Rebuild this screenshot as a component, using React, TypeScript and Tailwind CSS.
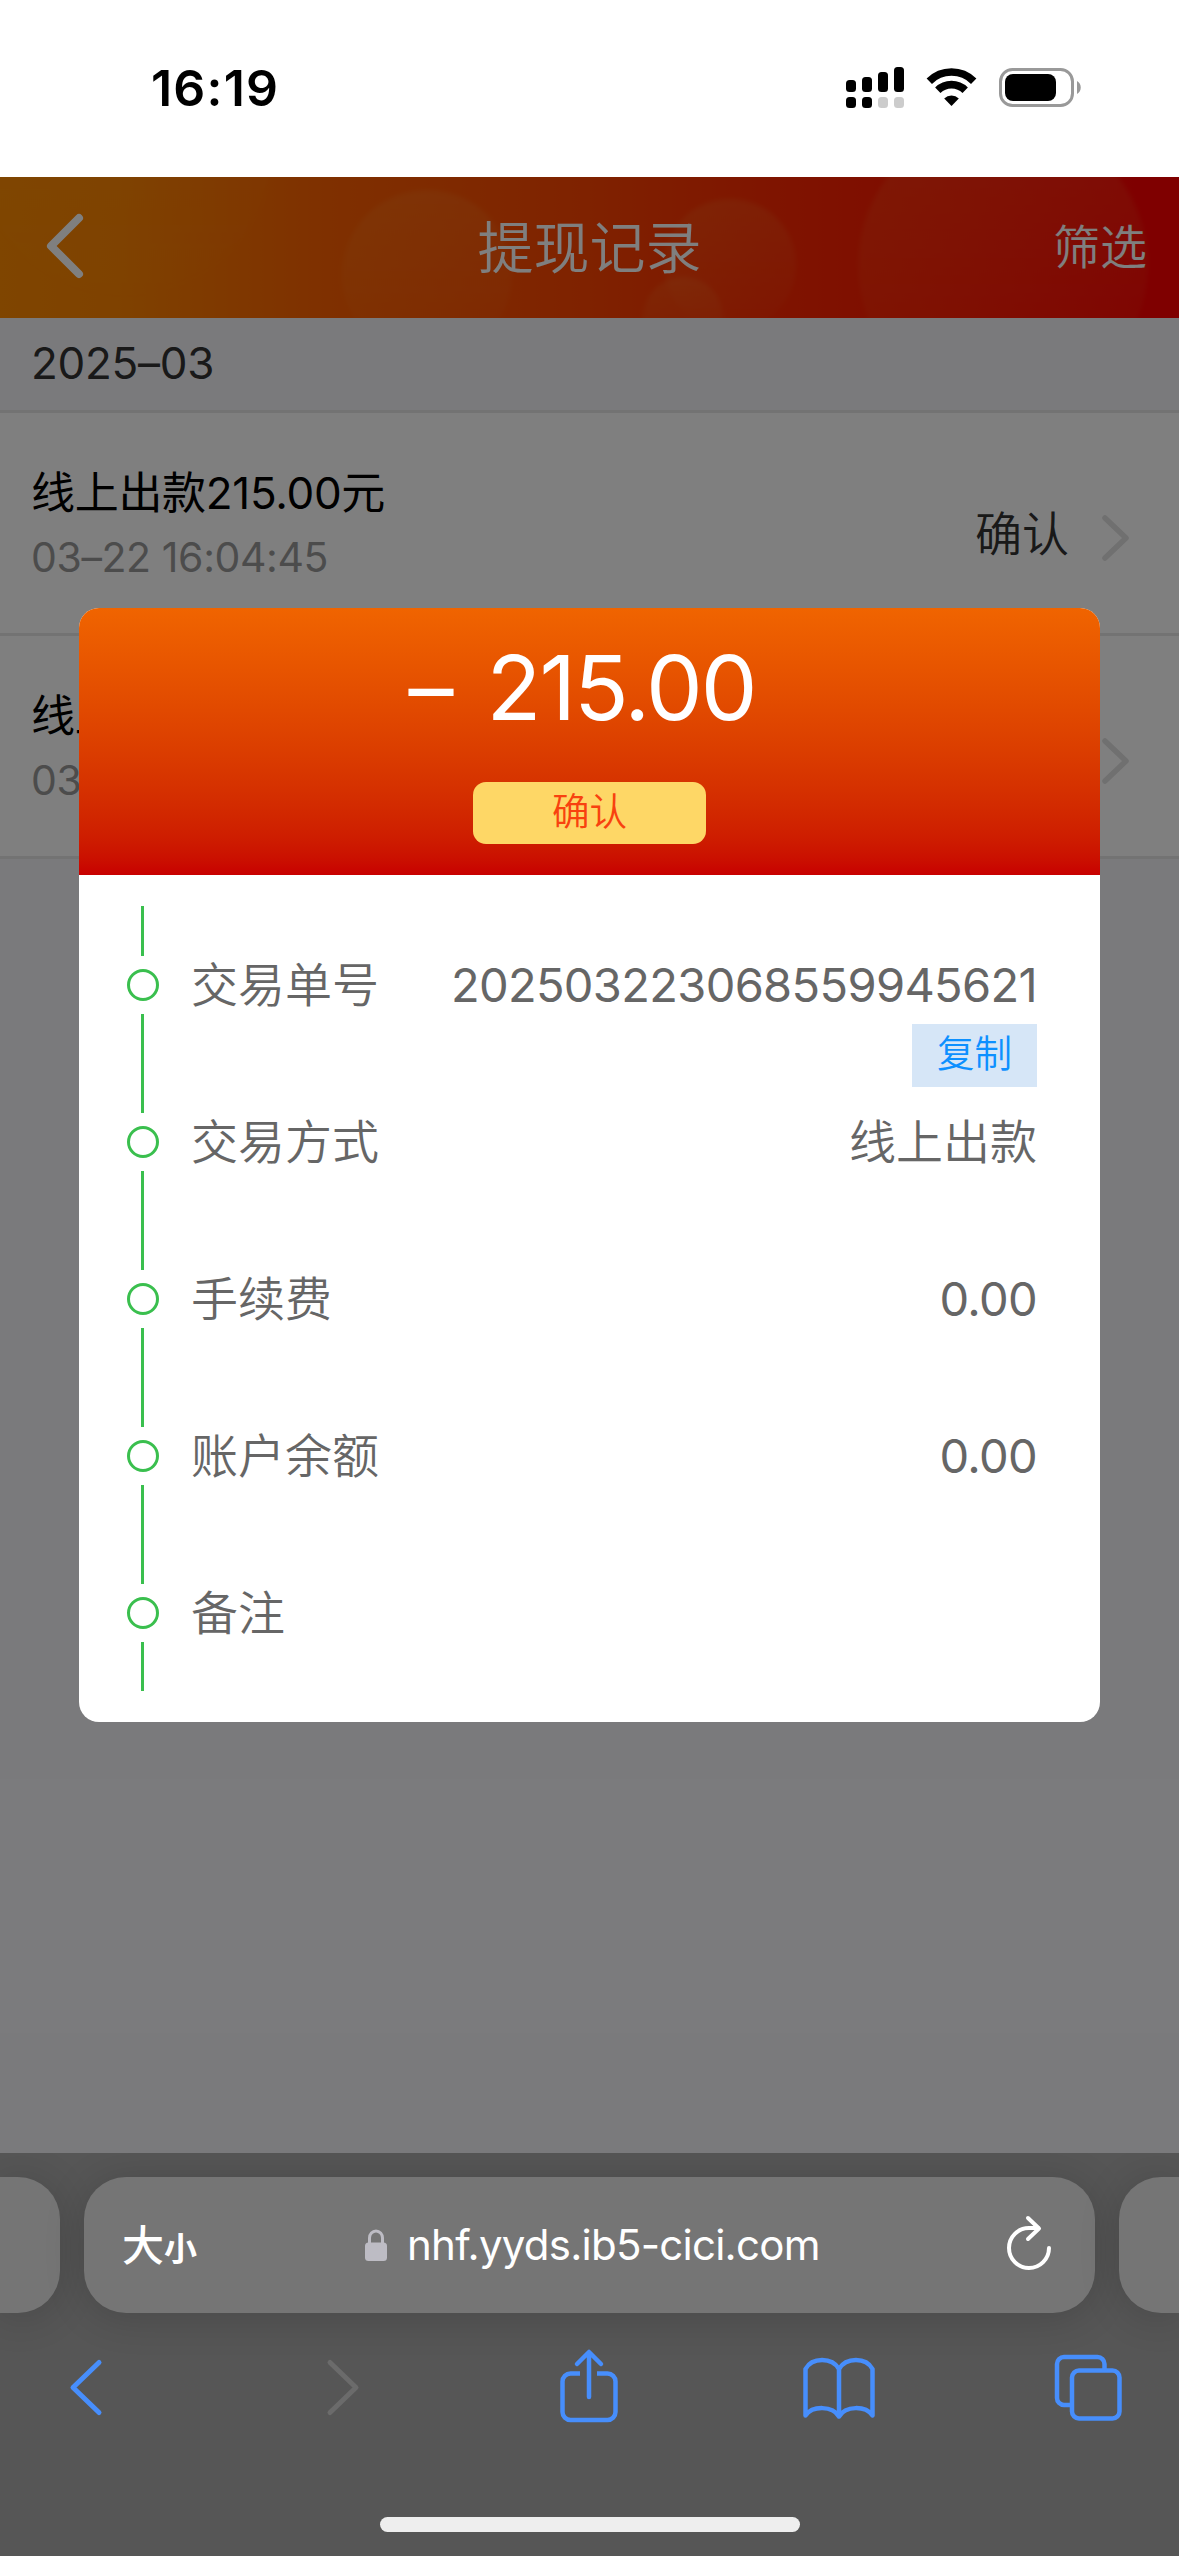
const records = [
    { title: "线上出款215.00元", time: "03–22 16:04:45", status: "确认" },
    { title: "线上出款215.00元", time: "03–22 16:01:12", status: "确认" },
];

const details = [
    { label: "交易单号", value: "202503223068559945621", copy: true },
    { label: "交易方式", value: "线上出款", text: true },
    { label: "手续费", value: "0.00" },
    { label: "账户余额", value: "0.00" },
    { label: "备注", value: "" },
];

function StatusBar() {
    return (
        <div className="h-[177px] bg-white flex justify-between pl-[151px] pr-[97px]">
            <div className="pt-[58px] h-[118px] leading-[60px] text-[50px] font-semibold tracking-[1.200px] text-black">16:19</div>
            <div className="flex pt-[66px]">
                <svg width="58" height="42" viewBox="0 0 58 42">
                    <rect x="0" y="14" width="10" height="12" rx="3.5" />
                    <rect x="16" y="11" width="10" height="15" rx="3.5" />
                    <rect x="32" y="6" width="10" height="20" rx="3.5" />
                    <rect x="48" y="1" width="10" height="25" rx="3.5" />
                    <rect x="0" y="31" width="10" height="11" rx="3.5" />
                    <rect x="16" y="31" width="10" height="11" rx="3.5" />
                    <rect x="32" y="31" width="10" height="11" rx="3.5" fill="#ccc" />
                    <rect x="48" y="31" width="10" height="11" rx="3.5" fill="#ccc" />
                </svg>
                <svg className="ml-[22px]" width="51" height="42" viewBox="0 0 51 42">
                    <path d="M3.3 15.2a31.5 31.5 0 0 1 44.4 0" fill="none" stroke="#000" strokeWidth="7.6" />
                    <path d="M11.8 24.2a19.5 19.5 0 0 1 27.4 0" fill="none" stroke="#000" strokeWidth="7.6" />
                    <path d="M18.2 32.6a10.4 10.4 0 0 1 14.6 0L25.5 40z" />
                </svg>
                <svg className="ml-[22px]" width="83" height="42" viewBox="0 0 83 42">
                    <rect x="1.5" y="3.5" width="72" height="36" rx="12" fill="none" stroke="#999" strokeWidth="3" />
                    <rect x="6" y="8" width="51" height="27" rx="8" />
                    <path d="M78 15c5 2.500 5 10.500 0 13z" fill="#999" />
                </svg>
            </div>
        </div>
    );
}

function NavBar() {
    return (
        <header className="relative h-[141px] bg-[linear-gradient(90deg,#ff8a00_0%,#ff8400_10%,#ff6000_28%,#ff4400_50%,#ff2800_66%,#ff1400_82%,#ff0000_97%)] overflow-hidden">
            <svg className="absolute inset-0" width="1179" height="141" viewBox="0 0 1179 141" fill="url(#bokeh)">
                <defs>
                    <linearGradient id="bokeh" x1="0" y1="0" x2="0" y2="1">
                        <stop offset="0" stopColor="#ffb450" stopOpacity="0.15" />
                        <stop offset="1" stopColor="#ffb450" stopOpacity="0.02" />
                    </linearGradient>
                    <filter id="soft">
                        <feGaussianBlur stdDeviation="2.500" />
                    </filter>
                </defs>
                <g filter="url(#soft)">
                    <circle cx="125" cy="-30" r="148" fillOpacity=".5" />
                    <circle cx="427" cy="98" r="85" />
                    <circle cx="730" cy="88" r="66" />
                    <circle cx="683" cy="140" r="40" />
                    <circle cx="1003" cy="88" r="145" />
                </g>
            </svg>
            <div className="relative h-full grid grid-cols-[1fr_auto_1fr] items-center pl-[45px] pr-[32px] text-white">
                <svg className="-mt-[3px]" width="92" height="68" viewBox="0 0 92 68" fill="none" stroke="currentColor" strokeWidth="8" strokeLinecap="round" strokeLinejoin="round">
                    <path d="M34 6 6 34l28 28" />
                </svg>
                <h1 className="text-[56px] leading-[70px] -ml-[13px] font-[350]">提现记录</h1>
                <span className="text-[47px] leading-[60px] pb-[2px] text-right">筛选</span>
            </div>
        </header>
    );
}

function RecordList() {
    return (
        <>
            <div className="h-[95px] bg-[#f5f5f9] border-b-[3px] border-[#e6e6e6] px-[31px] text-[44px] leading-[91px] tracking-[-0.3px] text-[#333] font-normal">2025–03</div>
            {records.map((record) => (
                <div key={record.time} className="h-[223px] bg-white border-b-[3px] border-[#e6e6e6] pl-[31px] pr-[48px] flex items-center justify-between">
                    <div className="pt-[3px] font-normal">
                        <div className="text-[44px] leading-[60px] text-black tracking-[-0.3px]">{record.title}</div>
                        <div className="mt-[4px] text-[41px] leading-[60px] tracking-[-0.4px] text-[#999]">{record.time}</div>
                    </div>
                    <div className="flex items-center pt-[30px]">
                        <span className="text-[47px] leading-[60px] text-[#333] mr-[32px] pb-[9px]">{record.status}</span>
                        <svg width="30" height="50" viewBox="0 0 30 50" fill="none" stroke="#e0e0e0" strokeWidth="5.500" strokeLinecap="round" strokeLinejoin="round">
                            <path d="m4 5 21 20L4 45" />
                        </svg>
                    </div>
                </div>
            ))}
        </>
    );
}

function DetailModal() {
    return (
        <div className="w-[1021px] rounded-[20px] bg-white overflow-hidden">
            <div className="h-[267px] bg-linear-to-b from-[#f06400] to-[#c80000] flex flex-col items-center">
                <div className="mt-[30px] mr-[15px] h-[100px] leading-[100px] text-[90px] text-white tracking-[-2px] font-normal">
                    –<span className="ml-[35px]">215.00</span>
                </div>
                <div className="mt-[44px] w-[233px] h-[62px] rounded-[13px] bg-[#fed766] text-center text-[37.500px] leading-[60px] text-[#f8420f]">确认</div>
            </div>
            <div className="pt-[31px] pb-[31px] pl-12 pr-[63px]">
                {details.map((item) => (
                    <div key={item.label} className="flex h-[157.2px]">
                        <div className="w-8 flex flex-col">
                            <i className="ml-[14px] w-[3px] h-[50px] bg-[#3abf4e]" />
                            <i className="my-[13px] w-8 h-8 shrink-0 rounded-full border-[3px] border-[#3abf4e]" />
                            <i className="ml-[14px] w-[3px] flex-1 bg-[#3abf4e]" />
                        </div>
                        <div className="ml-[32px] flex-1 flex justify-between text-[47px] leading-[60px] text-[#666] pt-[49px]">
                            <span>{item.label}</span>
                            <div className="flex flex-col items-end">
                                <span className={item.text ? "" : "font-normal tracking-[-0.65px]"}>{item.value}</span>
                                {item.copy && (
                                    <button className="mt-[9px] w-[125px] h-[63px] shrink-0 bg-[#d6e6f7] text-[37.500px] leading-[59px] pb-[4px] text-[#0d90ff]">复制</button>
                                )}
                            </div>
                        </div>
                    </div>
                ))}
            </div>
        </div>
    );
}

function BrowserBar() {
    return (
        <footer className="h-[403px] bg-[#565656] flex flex-col items-center overflow-hidden">
            <div className="mt-6 w-full h-[136px] flex justify-between">
                <div className="w-[60px] rounded-r-[42px] bg-[#757575] shadow-[0_4px_40px_rgba(0,0,0,0.16)]" />
                <div className="w-[1011px] rounded-[42px] bg-[#757575] shadow-[0_4px_40px_rgba(0,0,0,0.16)] flex items-center pl-[38px] pr-[43px] text-white">
                    <div className="flex items-baseline w-[243px] leading-[60px] pt-[4px]">
                        <span className="text-[42px] font-medium">大</span>
                        <span className="text-[33px] font-bold">小</span>
                    </div>
                    <svg width="22" height="32" viewBox="0 0 22 32">
                        <path d="M4.500 15V9a6.500 7 0 0 1 13 0v6" fill="none" stroke="#bdbcc4" strokeWidth="3" />
                        <rect y="13.500" width="22" height="18.500" rx="3.500" fill="#bdbcc4" />
                    </svg>
                    <span className="ml-[20px] text-[42px] leading-[60px] tracking-[-0.75px] flex-1">nhf.yyds.ib5-cici.com</span>
                    <svg className="-mt-[5px]" width="46" height="58" viewBox="0 0 46 58" fill="none" stroke="currentColor" strokeWidth="4" strokeLinecap="round" strokeLinejoin="round">
                        <path d="M43 34a20 20 0 1 1-20-20h9" />
                        <path d="m22 4 11 10.500L22 25" />
                    </svg>
                </div>
                <div className="w-[60px] rounded-l-[42px] bg-[#757575] shadow-[0_4px_40px_rgba(0,0,0,0.16)]" />
            </div>
            <div className="mt-[35px] w-full h-[78px] pl-[68px] flex items-center text-[#478efc]">
                <svg width="36" height="60" viewBox="0 0 36 60" fill="none" stroke="currentColor" strokeWidth="5" strokeLinecap="round" strokeLinejoin="round">
                    <path d="M31 5.500 5 30.500l26 25" />
                </svg>
                <svg className="ml-[221px] text-[#6b6b6b]" width="36" height="60" viewBox="0 0 36 60" fill="none" stroke="currentColor" strokeWidth="5" strokeLinecap="round" strokeLinejoin="round">
                    <path d="m5 5.500 26 25-26 25" />
                </svg>
                <svg className="ml-[199px]" width="58" height="78" viewBox="0 0 58 78" fill="none" stroke="currentColor" strokeWidth="4.500">
                    <path d="M20 25.500h-9.500a8 8 0 0 0-8 8V64a8 8 0 0 0 8 8h37a8 8 0 0 0 8-8V33.500a8 8 0 0 0-8-8H37" />
                    <path d="M29 49V5M17 16 29 4l12 12" strokeLinecap="round" strokeLinejoin="round" />
                </svg>
                <svg className="ml-[185px]" width="72" height="78" viewBox="0 0 72 78" fill="none" stroke="currentColor" strokeWidth="4.500" strokeLinejoin="round">
                    <path d="M36 21C29 9 9 9 2.500 21v46.500c7-10 27-10 33.500 1 6.500-11 26.500-11 33.500-1V21C63 9 43 9 36 21zv48" />
                </svg>
                <svg className="ml-[179px]" width="68" height="78" viewBox="0 0 68 78" fill="none" stroke="currentColor" strokeWidth="4.500">
                    <rect x="18" y="22.500" width="47.500" height="48" rx="7" />
                    <path d="M18 57h-8a7 7 0 0 1-7-7V16a7 7 0 0 1 7-7h33.500a7 7 0 0 1 7 7v6.500" />
                </svg>
            </div>
            <div className="mt-[91px] w-[420px] h-[15px] shrink-0 rounded-full bg-[#eee]" />
        </footer>
    );
}

export default function App() {
    return (
        <div className="w-[1179px] h-[2556px] overflow-hidden font-[Inter,'Noto_Sans_CJK_SC',sans-serif]">
            <StatusBar />
            <main className="relative h-[1976px] bg-[#f5f5f9] font-[350]">
                <NavBar />
                <RecordList />
                {/* Transaction detail overlay */}
                <div className="absolute inset-0 bg-black/50 flex items-center justify-center">
                    <DetailModal />
                </div>
            </main>
            <BrowserBar />
        </div>
    );
}
